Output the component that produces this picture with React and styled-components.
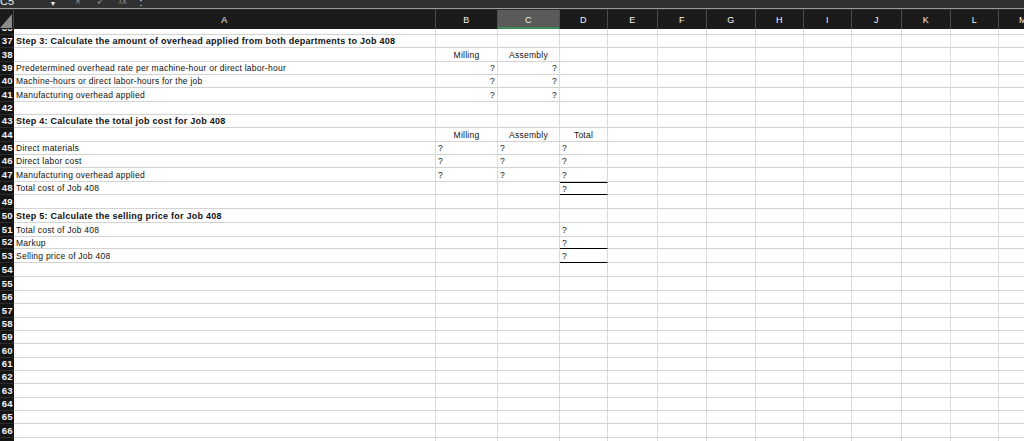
import React from 'react';
import styled, { createGlobalStyle } from 'styled-components';

const GlobalStyle = createGlobalStyle`
  html, body { margin: 0; padding: 0; background: #fff; }
  body { font-family: "Liberation Sans", Arial, sans-serif; }
`;

const COLS = [
  ['A', 422], ['B', 62], ['C', 62], ['D', 48], ['E', 50], ['F', 49], ['G', 49],
  ['H', 48], ['I', 48], ['J', 50], ['K', 49], ['L', 48], ['M', 49],
];
const TEMPLATE = `14px ${COLS.map((c) => c[1] + 'px').join(' ')}`;

const Sheet = styled.div`
  width: 1024px;
  height: 441px;
  overflow: hidden;
  background: #fff;
  display: flex;
  flex-direction: column;
`;

const FormulaBar = styled.div`
  flex: none;
  height: 8px;
  background: #303030;
  border-bottom: 1px solid #9c9c9c;
  overflow: hidden;
  display: flex;
  align-items: flex-end;
`;

// glyphs sit mostly above the visible strip, like the cropped original
const Tool = styled.span`
  flex: none;
  width: ${(p) => p.w}px;
  height: 14px;
  line-height: 14px;
  font-size: ${(p) => p.size || 11}px;
  color: ${(p) => (p.bright ? '#e8e8e8' : '#8d8d8d')};
  text-align: ${(p) => p.align || 'center'};
  margin-bottom: ${(p) => p.lift ?? 0}px;
`;

const HeaderRow = styled.div`
  flex: none;
  display: grid;
  grid-template-columns: ${TEMPLATE};
  height: 20px;
  background: #1b1b1b;
  border-top: 1px solid #2a2a2a;
  box-sizing: border-box;
`;

const Corner = styled.div`
  display: flex;
  align-items: flex-end;
  justify-content: flex-end;
  border-right: 1px solid #444;
  padding: 0 1px 1px 0;
  overflow: hidden;
`;

const ColHead = styled.div`
  display: flex;
  align-items: center;
  justify-content: center;
  color: #f4f4f4;
  font-size: 9px;
  letter-spacing: 0.3px;
  border-right: 1px solid #4c4c4c;
  background: ${(p) => (p.active ? '#5a5a5a' : 'transparent')};
  box-shadow: ${(p) => (p.active ? 'inset 0 -2px 0 #3f8a5b' : 'none')};
`;

const Row = styled.div`
  flex: none;
  display: grid;
  grid-template-columns: ${TEMPLATE};
  height: ${(p) => p.h}px;
  overflow: hidden;
`;

const RowHead = styled.div`
  background: #151515;
  color: #f4f4f4;
  font-size: 9.5px;
  font-weight: bold;
  letter-spacing: 0.4px;
  line-height: 13px;
  display: flex;
  align-items: flex-end;
  justify-content: flex-end;
  padding-right: 1px;
  overflow: hidden;
  white-space: nowrap;
  border-bottom: 1px solid #2c2c2c;
  box-sizing: border-box;
`;

const Cell = styled.div`
  box-sizing: border-box;
  border-right: 1px solid #dadada;
  border-bottom: ${(p) => (p.under ? '1px solid #000' : '1px solid #d3d3d3')};
  border-top: ${(p) => (p.over ? '1px solid #000' : 'none')};
  display: flex;
  align-items: center;
  justify-content: ${(p) =>
    p.align === 'right' ? 'flex-end' : p.align === 'center' ? 'center' : 'flex-start'};
  padding: 0 2px;
  font-size: ${(p) => (p.bold ? '9px' : '8.5px')};
  letter-spacing: 0.25px;
  font-weight: ${(p) => (p.bold ? 'bold' : 'normal')};
  color: #111;
  white-space: nowrap;
  position: relative;
  z-index: ${(p) => (p.text ? 1 : 0)};
`;

const HEIGHTS = {
  36: 6, 37: 13, 38: 14, 39: 13, 40: 13, 41: 14, 42: 13, 43: 13, 44: 14, 45: 13,
  46: 13, 47: 14, 48: 13, 49: 14, 50: 14, 51: 14, 52: 12, 53: 14, 54: 14, 55: 14,
  56: 13, 57: 14, 58: 13, 59: 13, 60: 14, 61: 13, 62: 13, 63: 14, 64: 13, 65: 13,
  66: 14, 67: 13,
};

const q = (align, extra) => ({ t: '?', align, ...extra });

const DATA = {
  37: { A: { t: 'Step 3: Calculate the amount of overhead applied from both departments to Job 408', bold: true } },
  38: { B: { t: 'Milling', align: 'center' }, C: { t: 'Assembly', align: 'center' } },
  39: { A: { t: 'Predetermined overhead rate per machine-hour or direct labor-hour' }, B: q('right'), C: q('right') },
  40: { A: { t: 'Machine-hours or direct labor-hours for the job' }, B: q('right'), C: q('right') },
  41: { A: { t: 'Manufacturing overhead applied' }, B: q('right'), C: q('right') },
  43: { A: { t: 'Step 4: Calculate the total job cost for Job 408', bold: true } },
  44: { B: { t: 'Milling', align: 'center' }, C: { t: 'Assembly', align: 'center' }, D: { t: 'Total', align: 'center' } },
  45: { A: { t: 'Direct materials' }, B: q(), C: q(), D: q() },
  46: { A: { t: 'Direct labor cost' }, B: q(), C: q(), D: q() },
  47: { A: { t: 'Manufacturing overhead applied' }, B: q(), C: q(), D: q() },
  48: { A: { t: 'Total cost of Job 408' }, D: q('left', { over: true, under: true }) },
  50: { A: { t: 'Step 5: Calculate the selling price for Job 408', bold: true } },
  51: { A: { t: 'Total cost of Job 408' }, D: q() },
  52: { A: { t: 'Markup' }, D: q('left', { under: true }) },
  53: { A: { t: 'Selling price of Job 408' }, D: q('left', { under: true }) },
};

function SelectAll() {
  return (
    <svg width="12" height="14" viewBox="0 0 12 14">
      <polygon points="12,0 12,14 0,14" fill="#8a8a8a" />
    </svg>
  );
}

export default function App() {
  const rowNums = Object.keys(HEIGHTS).map(Number);
  return (
    <Sheet>
      <GlobalStyle />
      <FormulaBar>
        <Tool w={14} bright align="left">C5</Tool>
        <Tool w={34} />
        <Tool w={10} bright size={7} lift={-3}>▼</Tool>
        <Tool w={14} />
        <Tool w={12}>×</Tool>
        <Tool w={10} />
        <Tool w={12}>✓</Tool>
        <Tool w={10} />
        <Tool w={14} size={10}><i>fx</i></Tool>
        <Tool w={8} />
        <Tool w={6} bright lift={-1}>:</Tool>
      </FormulaBar>
      <HeaderRow>
        <Corner><SelectAll /></Corner>
        {COLS.map(([name]) => (
          <ColHead key={name} active={name === 'C'}>{name}</ColHead>
        ))}
      </HeaderRow>
      {rowNums.map((n) => {
        const cells = DATA[n] || {};
        return (
          <Row key={n} h={HEIGHTS[n]}>
            <RowHead>{n}</RowHead>
            {COLS.map(([name]) => {
              const c = cells[name];
              return (
                <Cell
                  key={name}
                  text={!!c}
                  align={c && c.align}
                  bold={c && c.bold}
                  over={c && c.over}
                  under={c && c.under}
                >
                  {c ? c.t : null}
                </Cell>
              );
            })}
          </Row>
        );
      })}
    </Sheet>
  );
}
